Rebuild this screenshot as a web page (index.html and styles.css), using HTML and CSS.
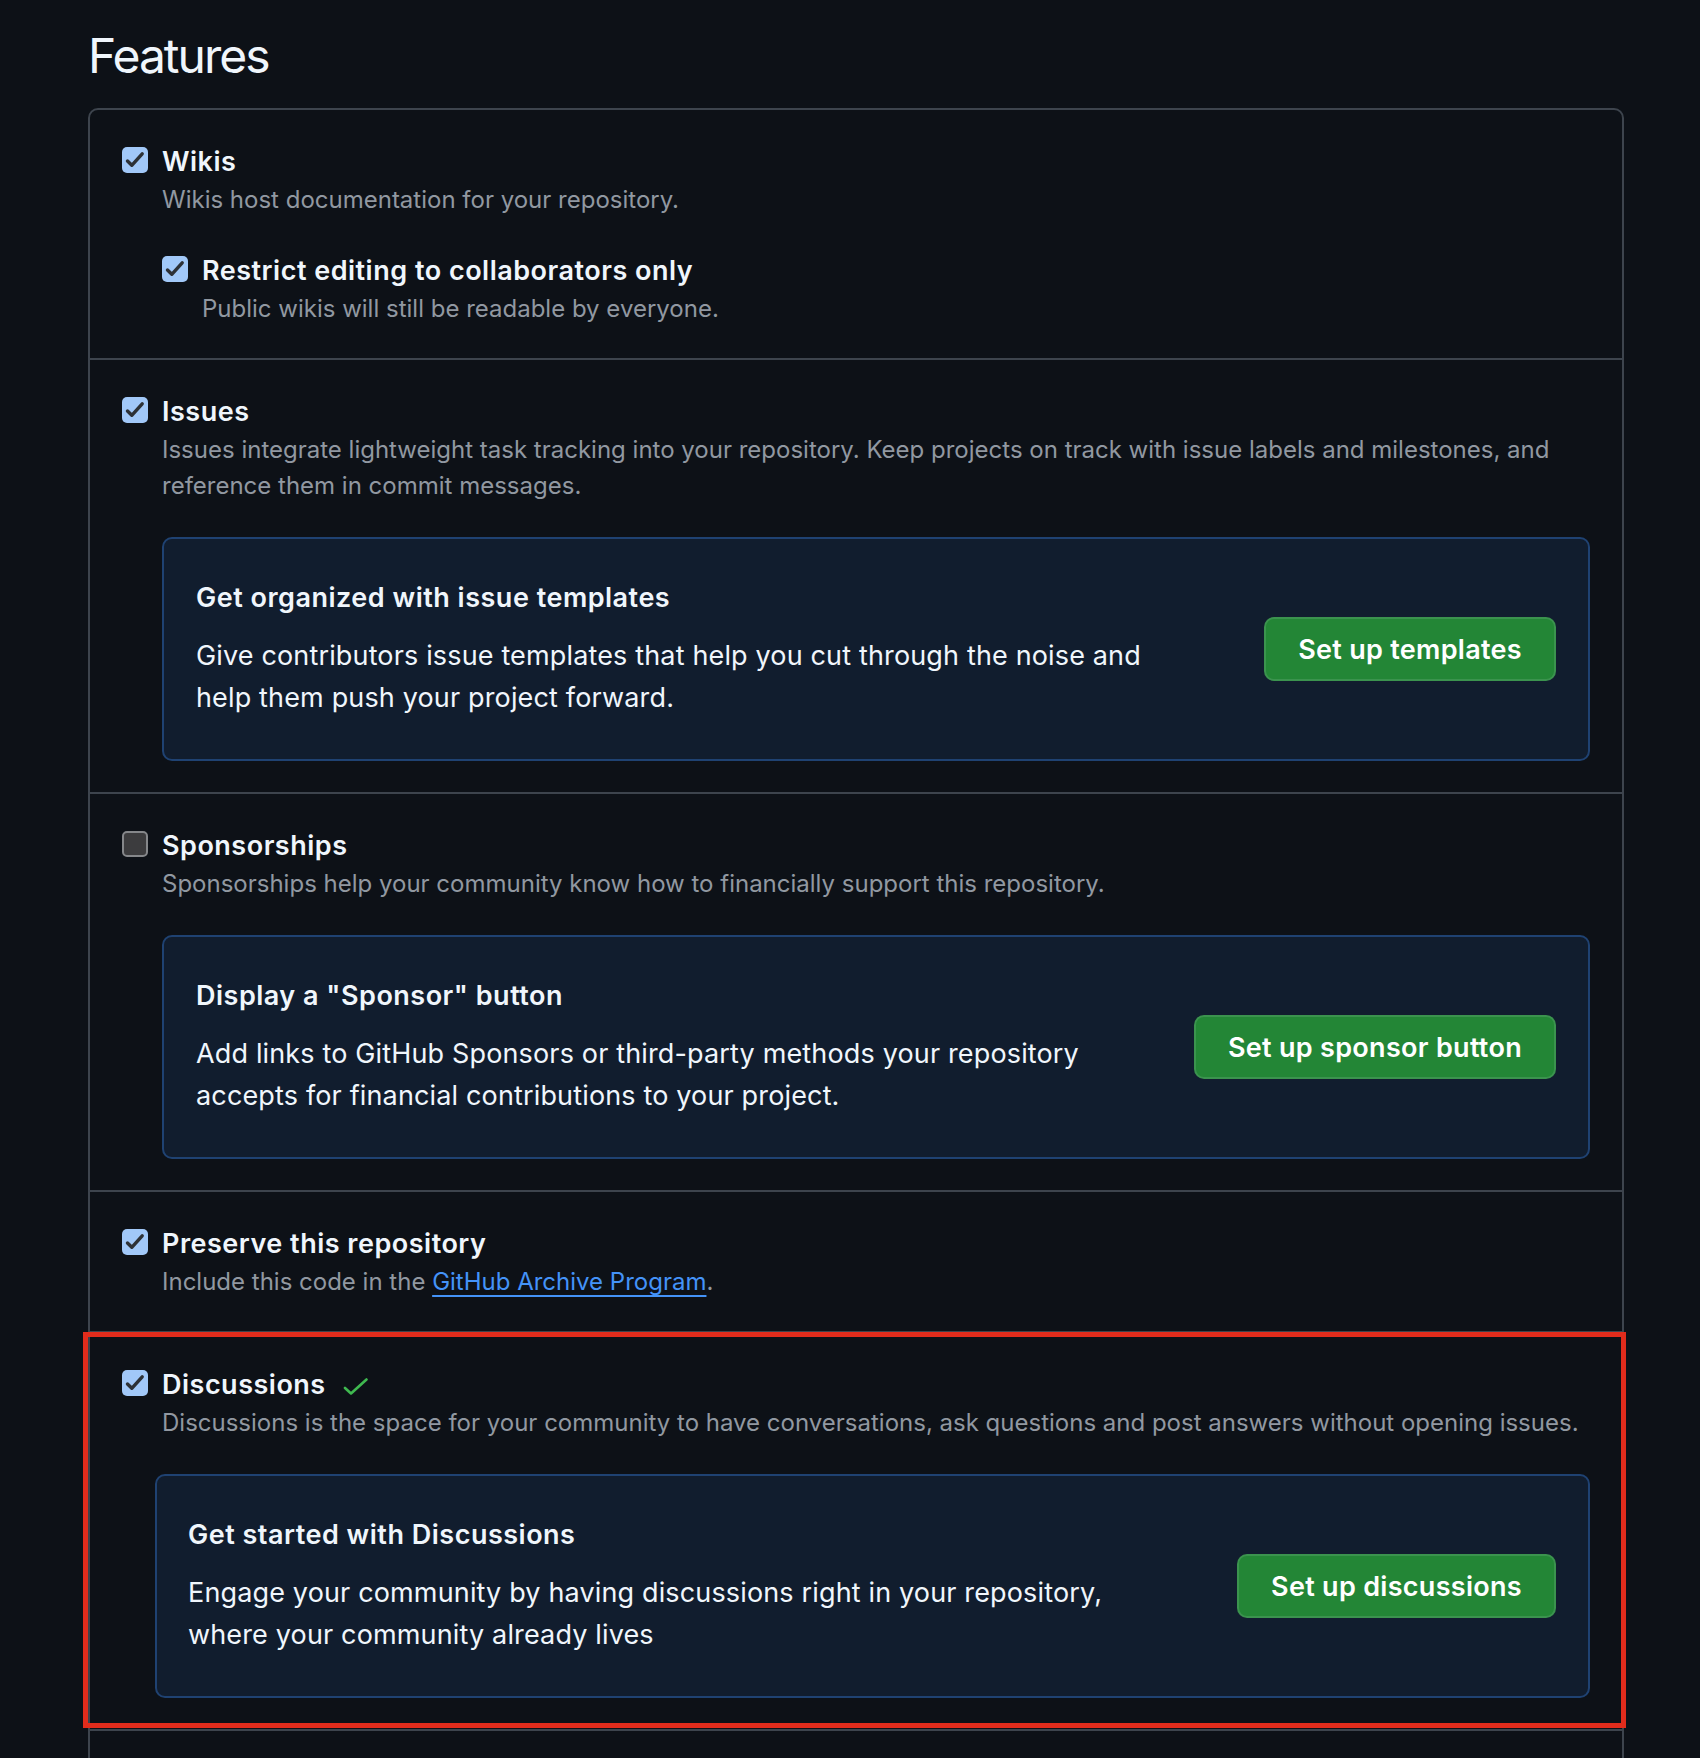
FILE: index.html
```html
<!DOCTYPE html>
<html lang="en">
<head>
    <meta charset="UTF-8">
    <meta name="viewport" content="width=device-width, initial-scale=1.0">
    <title>Features</title>
    <link rel="stylesheet" href="styles.css">
</head>
<body>
    <main class="settings">
        <h2 class="settings-title">Features</h2>

        <div class="feature-box">
            <!-- wikis -->
            <div class="feature-row">
                <div class="check-item">
                    <span class="checkbox checked">
                        <svg viewBox="0 0 26 26"><path d="M5.5 14 L9.8 18.3 L20.2 6.8"/></svg>
                    </span>
                    <div>
                        <div class="check-label">Wikis</div>
                        <p class="check-note">Wikis host documentation for your repository.</p>
                    </div>
                </div>
                <div class="check-item nested">
                    <span class="checkbox checked">
                        <svg viewBox="0 0 26 26"><path d="M5.5 14 L9.8 18.3 L20.2 6.8"/></svg>
                    </span>
                    <div>
                        <div class="check-label">Restrict editing to collaborators only</div>
                        <p class="check-note">Public wikis will still be readable by everyone.</p>
                    </div>
                </div>
            </div>

            <!-- issues -->
            <div class="feature-row">
                <div class="check-item">
                    <span class="checkbox checked">
                        <svg viewBox="0 0 26 26"><path d="M5.5 14 L9.8 18.3 L20.2 6.8"/></svg>
                    </span>
                    <div>
                        <div class="check-label">Issues</div>
                        <p class="check-note">Issues integrate lightweight task tracking into your repository. Keep projects on track with issue labels and milestones, and reference them in commit messages.</p>
                    </div>
                </div>
                <div class="callout">
                    <div class="callout-text">
                        <h3>Get organized with issue templates</h3>
                        <p>Give contributors issue templates that help you cut through the noise and help them push your project forward.</p>
                    </div>
                    <button class="btn-primary" type="button">Set up templates</button>
                </div>
            </div>

            <!-- sponsorships -->
            <div class="feature-row">
                <div class="check-item">
                    <span class="checkbox"></span>
                    <div>
                        <div class="check-label">Sponsorships</div>
                        <p class="check-note">Sponsorships help your community know how to financially support this repository.</p>
                    </div>
                </div>
                <div class="callout">
                    <div class="callout-text">
                        <h3>Display a "Sponsor" button</h3>
                        <p>Add links to GitHub Sponsors or third-party methods your repository accepts for financial contributions to your project.</p>
                    </div>
                    <button class="btn-primary" type="button">Set up sponsor button</button>
                </div>
            </div>

            <!-- archive program -->
            <div class="feature-row">
                <div class="check-item">
                    <span class="checkbox checked">
                        <svg viewBox="0 0 26 26"><path d="M5.5 14 L9.8 18.3 L20.2 6.8"/></svg>
                    </span>
                    <div>
                        <div class="check-label">Preserve this repository</div>
                        <p class="check-note">Include this code in the <a href="#">GitHub Archive Program</a>.</p>
                    </div>
                </div>
            </div>

            <!-- discussions (highlighted) -->
            <div class="feature-row marked">
                <div class="check-item">
                    <span class="checkbox checked">
                        <svg viewBox="0 0 26 26"><path d="M5.5 14 L9.8 18.3 L20.2 6.8"/></svg>
                    </span>
                    <div>
                        <div class="check-label">Discussions<svg class="saved-check" viewBox="0 0 26 18"><path d="M2 10 L8 15.5 L23.5 1.5"/></svg></div>
                        <p class="check-note">Discussions is the space for your community to have conversations, ask questions and post answers without opening issues.</p>
                    </div>
                </div>
                <div class="callout wide">
                    <div class="callout-text">
                        <h3>Get started with Discussions</h3>
                        <p>Engage your community by having discussions right in your repository, where your community already lives</p>
                    </div>
                    <button class="btn-primary" type="button">Set up discussions</button>
                </div>
                <div class="highlight"></div>
            </div>

            <!-- next section continues below the fold -->
            <div class="feature-row more"></div>
        </div>
    </main>
</body>
</html>
```

FILE: styles.css
```css
* {
    box-sizing: border-box;
}

body {
    margin: 0;
    background: #0d1117;
    color: #f0f6fc;
    font-family: Inter, "Liberation Sans", sans-serif;
}

.settings {
    padding: 0 76px 40px 88px;
}

.settings-title {
    font-size: 48px;
    font-weight: 400;
    line-height: 60px;
    letter-spacing: -2px;
    margin: 26px 0 22px;
}

.feature-box {
    border: 2px solid #3d444d;
    border-radius: 10px;
}

.feature-row {
    padding: 33px 32px 31px;
}
.feature-row + .feature-row {
    border-top: 2px solid #3d444d;
}
.feature-row.marked {
    position: relative;
}
.feature-row.more {
    min-height: 80px;
}

/* checkbox rows */
.check-item {
    display: flex;
    align-items: flex-start;
    gap: 14px;
}
.check-item.nested {
    margin: 34px 0 0 40px;
}

.checkbox {
    flex: none;
    width: 26px;
    height: 26px;
    margin-top: 4px;
    border-radius: 5px;
    background: #3c3c3e;
    border: 2px solid #85878a;
}
.checkbox.checked {
    background: #a1c8f8;
    border: none;
}
.checkbox svg {
    display: block;
    width: 26px;
    height: 26px;
    fill: none;
    stroke: #2d3136;
    stroke-width: 3.4;
    stroke-linecap: round;
    stroke-linejoin: round;
}

.check-label {
    font-size: 27px;
    font-weight: 600;
    line-height: 38px;
    letter-spacing: 0.5px;
}

.saved-check {
    width: 26px;
    height: 18px;
    margin-left: 17px;
    vertical-align: -2px;
    fill: none;
    stroke: #3fb950;
    stroke-width: 2.6;
    stroke-linecap: round;
    stroke-linejoin: round;
}

.check-note {
    margin: 1px 0 0;
    font-size: 24px;
    line-height: 36px;
    color: #9198a1;
}
.check-note a {
    color: #4493f8;
    text-decoration: underline;
    text-decoration-thickness: 2px;
    text-underline-offset: 5px;
}

/* blue callouts */
.callout {
    display: flex;
    align-items: center;
    margin: 33px 0 0 40px;
    padding: 40px 32px;
    background: #111d2e;
    border: 2px solid #1f4272;
    border-radius: 10px;
}
.callout.wide {
    margin-left: 33px;
    padding-left: 31px;
}

.callout-text {
    flex: 1;
    max-width: 960px;
}
.callout-text h3 {
    margin: 0;
    font-size: 27px;
    font-weight: 600;
    line-height: 38px;
    letter-spacing: 0.5px;
}
.callout-text p {
    margin: 18px 0 0;
    font-size: 27px;
    line-height: 42px;
    letter-spacing: 0.15px;
}

.btn-primary {
    flex: none;
    margin-left: auto;
    height: 64px;
    padding: 0 32px;
    background: #238636;
    color: #ffffff;
    border: 2px solid rgba(240, 246, 252, 0.12);
    border-radius: 10px;
    font-family: inherit;
    font-size: 27px;
    font-weight: 600;
    letter-spacing: 0.3px;
    white-space: nowrap;
    cursor: pointer;
}

/* red annotation frame around the discussions row */
.highlight {
    position: absolute;
    top: -1px;
    left: -7px;
    right: -4px;
    bottom: 1px;
    border: 5px solid #e12c1c;
    pointer-events: none;
}
```
